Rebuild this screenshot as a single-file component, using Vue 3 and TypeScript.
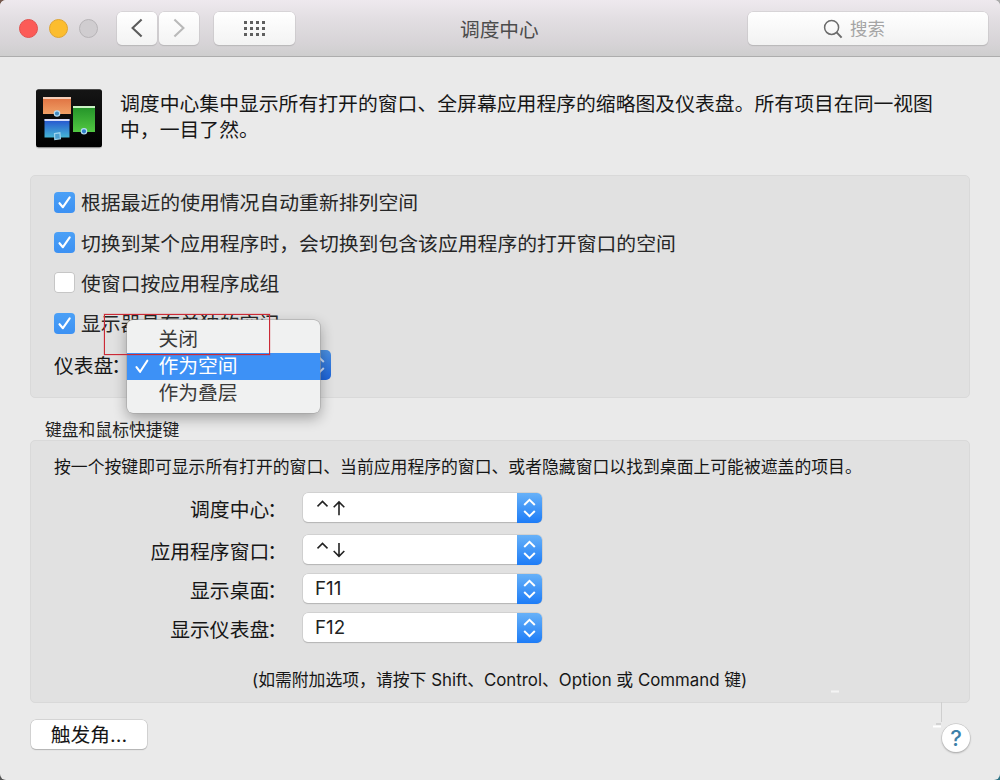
<script setup lang="ts">
import { ref } from 'vue'

interface Option {
  label: string
  checked: boolean
}

interface Shortcut {
  label: string
  key: string
  arrow?: 'up' | 'down'
}

const options = ref<Option[]>([
  { label: '根据最近的使用情况自动重新排列空间', checked: true },
  { label: '切换到某个应用程序时，会切换到包含该应用程序的打开窗口的空间', checked: true },
  { label: '使窗口按应用程序成组', checked: false },
  { label: '显示器具有单独的空间', checked: true },
])

const menuItems = ['关闭', '作为空间', '作为叠层']
const selected = ref('作为空间')

const shortcuts: Shortcut[] = [
  { label: '调度中心', key: '', arrow: 'up' },
  { label: '应用程序窗口', key: '', arrow: 'down' },
  { label: '显示桌面', key: 'F11' },
  { label: '显示仪表盘', key: 'F12' },
]
</script>

<template>
  <div class="desktop">
    <div class="window">
      <header class="titlebar">
        <div class="lights">
          <span class="light red"></span>
          <span class="light yellow"></span>
          <span class="light off"></span>
        </div>
        <div class="nav">
          <button class="tool" aria-label="后退">
            <svg width="12" height="20" viewBox="0 0 12 20"><path d="M10.6 1.4 1.6 10l9 8.6" fill="none" stroke="#5c5c5c" stroke-width="2.1" /></svg>
          </button>
          <button class="tool" aria-label="前进">
            <svg width="12" height="20" viewBox="0 0 12 20"><path d="M1.4 1.4 10.4 10l-9 8.6" fill="none" stroke="#b9b9b9" stroke-width="2.1" /></svg>
          </button>
        </div>
        <button class="tool grid-button" aria-label="显示全部">
          <span class="dots"><i v-for="n in 12" :key="n"></i></span>
        </button>
        <h1 class="title">调度中心</h1>
        <div class="search">
          <svg width="20" height="20" viewBox="0 0 20 20"><circle cx="8.6" cy="8.4" r="7" fill="none" stroke="#6b6b6b" stroke-width="1.5" /><path d="m13.6 13.4 5 5.2" stroke="#6b6b6b" stroke-width="2" /></svg>
          <span>搜索</span>
        </div>
      </header>

      <main class="content">
        <section class="intro">
          <svg class="app-icon" width="68" height="62" viewBox="0 0 68 62">
            <defs>
              <linearGradient id="orange" x1="0" y1="0" x2="0" y2="1"><stop offset="0" stop-color="#df7040" /><stop offset="1" stop-color="#f0a066" /></linearGradient>
              <linearGradient id="blue" x1="0" y1="0" x2="0" y2="1"><stop offset="0" stop-color="#2450cf" /><stop offset="1" stop-color="#45b5d5" /></linearGradient>
              <linearGradient id="green" x1="0" y1="0" x2="0" y2="1"><stop offset="0" stop-color="#229128" /><stop offset="1" stop-color="#52c742" /></linearGradient>
              <linearGradient id="black" x1="0" y1="0" x2="0" y2="1"><stop offset="0" stop-color="#151515" /><stop offset="1" stop-color="#000" /></linearGradient>
            </defs>
            <rect x="1" y="1.6" width="66" height="58" rx="2.5" fill="#999" opacity=".5" />
            <rect x="1" y="0.3" width="66" height="58" rx="2.5" fill="url(#black)" />
            <rect x="8" y="8" width="28" height="17" fill="url(#orange)" />
            <rect x="8" y="8" width="28" height="2" fill="#f5cdb8" />
            <rect x="9.5" y="30" width="25" height="18.5" fill="url(#blue)" />
            <rect x="9.5" y="30" width="25" height="2" fill="#d5dcfa" />
            <rect x="38" y="17" width="22" height="26" fill="url(#green)" />
            <rect x="38" y="17" width="22" height="2" fill="#caf3c4" />
            <circle cx="22" cy="24.5" r="2.7" fill="#438bc2" stroke="#b7ddf2" stroke-width="1.2" />
            <circle cx="49" cy="42.3" r="2.7" fill="#2d7eca" stroke="#b7ddf2" stroke-width="1.2" />
            <path d="m19.5 44.6 5.4-.8.5 6-5.6.8z" fill="#4b9fd0" stroke="#9bd3ee" stroke-width="1.2" />
          </svg>
          <p>调度中心集中显示所有打开的窗口、全屏幕应用程序的缩略图及仪表盘。所有项目在同一视图<br />中，一目了然。</p>
        </section>

        <section class="panel spaces">
          <label v-for="option in options" :key="option.label" class="option">
            <span class="box" :class="{ on: option.checked }" @click="option.checked = !option.checked">
              <svg v-if="option.checked" width="21" height="21" viewBox="0 0 21 21"><path d="m5.5 11.2 3.4 4L15.7 5.4" fill="none" stroke="#fff" stroke-width="2.1" stroke-linecap="round" stroke-linejoin="round" /></svg>
            </span>
            <span class="option-label">{{ option.label }}</span>
          </label>
          <div class="dashboard">
            <span class="dashboard-label">仪表盘<span class="colon">：</span></span>
            <div class="popup">
              <span class="stepper">
                <svg width="13" height="20" viewBox="0 0 13 20"><path d="M1.2 7 6.5 1.9 11.8 7M1.2 13l5.3 5.1 5.3-5.1" fill="none" stroke="#c9dcf7" stroke-width="2" /></svg>
              </span>
              <ul class="menu">
                <li v-for="item in menuItems" :key="item" :class="{ selected: item === selected }" @click="selected = item">
                  <svg v-if="item === selected" class="tick" width="14" height="15" viewBox="0 0 14 15"><path d="m1.5 8.2 3.6 4.6L12.3 1.7" fill="none" stroke="#fff" stroke-width="2.1" stroke-linecap="round" stroke-linejoin="round" /></svg>
                  {{ item }}
                </li>
              </ul>
              <div class="marker"></div>
            </div>
          </div>
        </section>

        <h2 class="group-title">键盘和鼠标快捷键</h2>

        <section class="panel keys">
          <p class="hint">按一个按键即可显示所有打开的窗口、当前应用程序的窗口、或者隐藏窗口以找到桌面上可能被遮盖的项目。</p>
          <div class="shortcuts">
            <div v-for="row in shortcuts" :key="row.label" class="shortcut" :class="{ first: row.arrow === 'up' }">
              <span class="shortcut-label">{{ row.label }}<span class="colon">：</span></span>
              <div class="select">
                <svg v-if="row.arrow" class="combo" width="30" height="18" viewBox="0 0 30 18">
                  <path d="m1.5 7.4 5-5 5 5" fill="none" stroke="#222" stroke-width="1.5" />
                  <path v-if="row.arrow === 'up'" d="M23 16.2V3M17.7 8.2 23 2.9l5.3 5.3" fill="none" stroke="#222" stroke-width="1.6" />
                  <path v-else d="M23 2v13.2M17.7 10l5.3 5.3 5.3-5.3" fill="none" stroke="#222" stroke-width="1.6" />
                </svg>
                <span v-else class="key">{{ row.key }}</span>
                <span class="stepper">
                  <svg width="13" height="20" viewBox="0 0 13 20"><path d="M1.2 7 6.5 1.9 11.8 7M1.2 13l5.3 5.1 5.3-5.1" fill="none" stroke="#fff" stroke-width="2" /></svg>
                </span>
              </div>
            </div>
          </div>
          <p class="note">(如需附加选项，请按下 Shift、Control、Option 或 Command 键)</p>
        </section>

        <footer class="footer">
          <button class="corners">触发角...</button>
          <button class="help">?</button>
        </footer>
      </main>
      <svg class="scratches" width="120" height="60" viewBox="0 0 120 60">
        <path d="M11 6.5h8" stroke="#f4f4f4" stroke-width="2" />
        <path d="M121.500 17v20" stroke="#cfcfcf" />
        <path d="M113 41.5h8" stroke="#fff" stroke-width="2" />
        <path d="M116 39h5" stroke="#bbb" />
      </svg>
    </div>
  </div>
</template>

<style>
body {
  margin: 0;
}
</style>

<style scoped>
* {
  box-sizing: border-box;
}

h1,
h2,
p,
ul {
  margin: 0;
  padding: 0;
  font-weight: 400;
}

button {
  padding: 0;
  border: 0;
  font: inherit;
  color: inherit;
}

svg {
  display: block;
  flex: none;
}

.desktop {
  width: 1000px;
  height: 780px;
  overflow: hidden;
  background: conic-gradient(#aaa 0 25%, #2f7486 0 50%, #555 0 75%, #76594e 0);
  font-family: Inter, 'Noto Sans CJK SC', sans-serif;
  font-size: 19.8px;
  line-height: 26px;
  color: #161616;
}

.window {
  position: relative;
  height: 780px;
  border-radius: 6px;
  overflow: hidden;
  background: #eaeaea;
}

.titlebar {
  display: flex;
  align-items: center;
  height: 57px;
  padding: 0 12px 0 19px;
  border-bottom: 1px solid #adadad;
  background: linear-gradient(#eee9ee, #e2dee2 35%, #d6d3d6 80%, #cecece);
}

.lights {
  display: flex;
  gap: 11px;
  width: 98px;
}

.light {
  width: 19px;
  height: 19px;
  border-radius: 50%;
  border: 1px solid;
}

.red {
  background: #fc5b57;
  border-color: #e2514e;
}

.yellow {
  background: #fcbd2e;
  border-color: #dfa431;
}

.off {
  background: #d0cdd0;
  border-color: #b7b4b7;
}

.nav {
  display: flex;
  gap: 2px;
}

.tool {
  display: grid;
  place-items: center;
  width: 40px;
  height: 33px;
  border-radius: 5px;
  background: linear-gradient(#fff, #f3f3f3);
  box-shadow: 0 0 0 0.5px #c8c5c8, 0 1px 1px #aaa;
}

.grid-button {
  width: 81px;
  margin-left: 15px;
}

.dots {
  display: grid;
  grid-template-columns: repeat(4, 3px);
  gap: 3px;
}

.dots i {
  width: 3px;
  height: 3px;
  background: #5f5f5f;
}

.title {
  flex: 1;
  padding: 4px 0 0 165px;
  font-size: 19.7px;
  color: #4c4c4c;
}

.search {
  display: flex;
  justify-content: center;
  align-items: center;
  gap: 7px;
  width: 240px;
  height: 33px;
  padding: 2px 28px 0 0;
  border-radius: 5px;
  background: linear-gradient(#fff, #f2f2f2);
  box-shadow: 0 0 0 0.5px #c8c5c8, 0 1px 1px #aaa;
  font-size: 17.5px;
  color: #a5a5a5;
}

.content {
  padding: 32px 30px 0;
}

.intro {
  display: flex;
  height: 86px;
  padding-left: 5px;
}

.intro p {
  margin: 2px 0 0 17px;
  font-size: 19.84px;
  line-height: 26px;
  white-space: nowrap;
}

.panel {
  border: 1px solid #d9d9d9;
  border-radius: 5px;
  background: #e1e1e1;
}

.spaces {
  height: 223px;
  padding: 6px 0 0 23px;
}

.option {
  display: flex;
  align-items: center;
  gap: 6px;
  height: 40.4px;
  white-space: nowrap;
}

.option-label {
  padding-top: 2px;
  font-size: 19.83px;
  color: #262626;
}

.box {
  width: 21px;
  height: 21px;
  border-radius: 4px;
  background: #fff;
  box-shadow: inset 0 0 0 1px #c6c6c6;
}

.box.on {
  background: linear-gradient(#4ba0f6, #3c91f3);
  box-shadow: none;
}

.dashboard {
  display: flex;
  align-items: center;
  height: 44px;
}

.dashboard-label {
  width: 73px;
  white-space: nowrap;
}

.colon {
  margin: 0 2px 0 -2px;
}

.popup {
  position: relative;
  display: flex;
  justify-content: flex-end;
  width: 204px;
  height: 31px;
}

.stepper {
  display: grid;
  place-items: center;
  width: 25px;
  height: 30px;
  border-radius: 0 5px 5px 0;
  background: linear-gradient(#67b1f8, #1d7cf7);
}

.popup .stepper {
  background: linear-gradient(#4a8fe0, #1c63d8);
}

.menu {
  position: absolute;
  left: 0;
  top: -30px;
  width: 193px;
  height: 93px;
  padding: 6px 0;
  border-radius: 6px;
  background: #f0f1f1;
  box-shadow: 0 0 0 0.5px #a0a0a0, 0 5px 14px rgba(0, 0, 0, 0.32);
  list-style: none;
  color: #3a3a3a;
}

.menu li {
  position: relative;
  height: 27px;
  padding-left: 31.5px;
  line-height: 26px;
}

.menu li.selected {
  background: #3d91f6;
  color: #fff;
}

.tick {
  position: absolute;
  left: 8px;
  top: 6px;
}

.marker {
  position: absolute;
  left: -23px;
  top: -36px;
  width: 166px;
  height: 41px;
  border: 1px solid #cb2a36;
  box-shadow: 0 0 0 0.5px rgba(214, 50, 60, 0.3);
}

.group-title {
  height: 42px;
  padding: 19px 0 0 15px;
  font-size: 16.8px;
  line-height: 26px;
  color: #222;
}

.keys {
  height: 263px;
  padding: 14px 0 0 23px;
}

.hint,
.note {
  font-size: 16.84px;
  line-height: 24px;
  white-space: nowrap;
}

.shortcuts {
  display: flex;
  flex-direction: column;
  padding-top: 14px;
}

.shortcut {
  display: flex;
  align-items: center;
  height: 39px;
}

.shortcut.first {
  height: 37px;
  align-items: flex-start;
}

.shortcut-label {
  width: 235px;
  padding-top: 4px;
  text-align: right;
}

.select {
  display: flex;
  align-items: center;
  width: 239px;
  height: 29px;
  margin-left: 14px;
  border-radius: 5px;
  background: #fff;
  box-shadow: 0 0 0 0.5px #c2c2c2, 0 1px 1px #aaa;
}

.select .stepper {
  margin-left: auto;
}

.combo {
  margin-left: 13px;
}

.key {
  padding-left: 12px;
  font-size: 18.8px;
  color: #222;
}

.note {
  margin-top: 21px;
  padding-left: 198px;
}

.footer {
  display: flex;
  justify-content: space-between;
  padding: 17px 0 0 1px;
}

.corners {
  width: 116px;
  height: 29px;
  border-radius: 5px;
  background: #fff;
  box-shadow: 0 0 0 0.5px #bdbdbd, 0 1px 1px #aaa;
}

.help {
  width: 28px;
  height: 28px;
  margin-top: 4px;
  border-radius: 50%;
  background: #fff;
  box-shadow: 0 0 0 0.5px #bdbdbd, 0 1px 2px #999;
  font-size: 22px;
  font-weight: 500;
  line-height: 28px;
  color: #3d7fa8;
}

.scratches {
  position: absolute;
  left: 820px;
  top: 685px;
  overflow: visible;
  pointer-events: none;
}
</style>
